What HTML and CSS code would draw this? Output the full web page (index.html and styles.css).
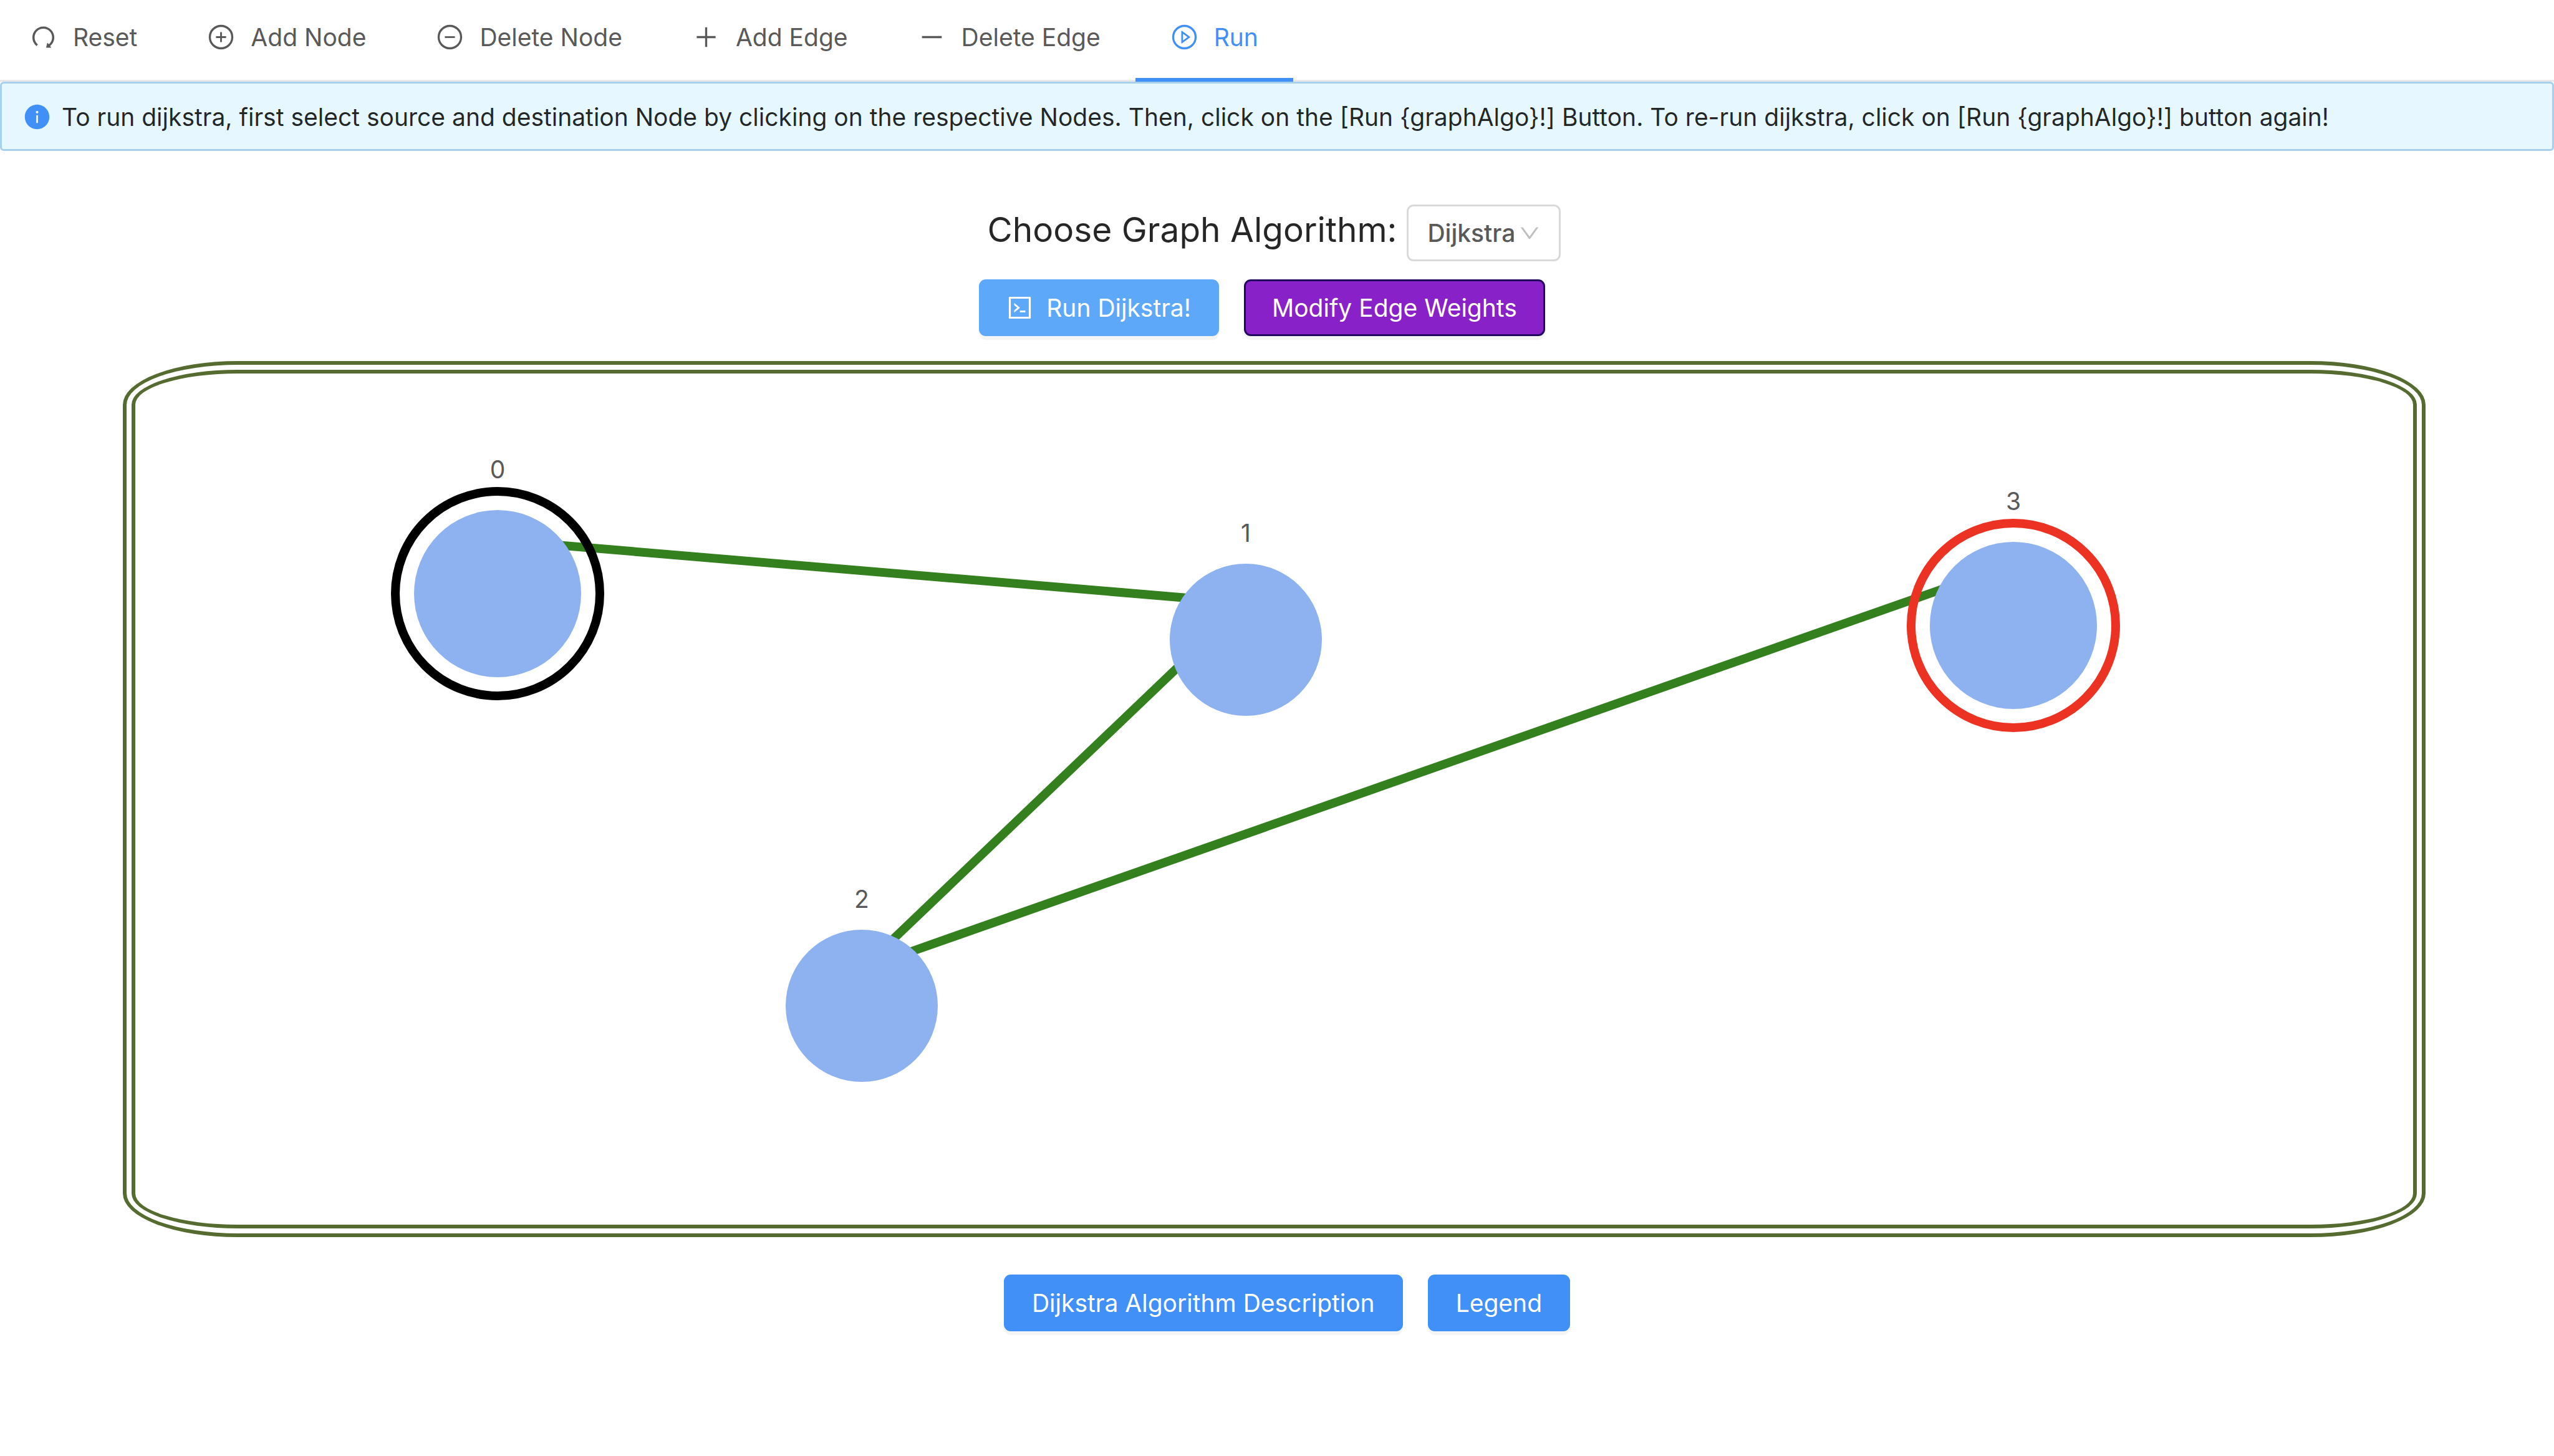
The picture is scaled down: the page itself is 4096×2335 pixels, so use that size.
FILE: index.html
```html
<!DOCTYPE html>
<html lang="en">
<head>
<meta charset="utf-8">
<meta name="viewport" content="width=device-width, initial-scale=1">
<title>Graph Algorithms</title>
<link rel="stylesheet" href="styles.css">
</head>
<body>
<nav class="menu" aria-label="Graph tools">
  <button class="menu-item" type="button">
    <svg class="icon" viewBox="0 0 1024 1024" aria-hidden="true"><path transform="translate(1024 0) scale(-1 1)" d="M511.4 124C290.5 124.3 112 303 112 523.9c0 128 60.2 242 153.8 315.2l-37.5 48c-4.1 5.3-.3 13 6.3 12.9l167-.8c5.2 0 9-4.9 7.7-9.9L369.8 727a8 8 0 00-14.1-3L315 776.1c-10.2-8-20-16.7-29.3-26a318.64 318.64 0 01-68.6-101.7C200.4 609 192 567.1 192 523.9s8.4-85.1 25.1-124.5c16.1-38.1 39.2-72.3 68.6-101.7 29.4-29.4 63.6-52.5 101.7-68.6C426.9 212.4 468.8 204 512 204s85.1 8.4 124.5 25.1c38.1 16.1 72.3 39.2 101.7 68.6 29.4 29.4 52.5 63.6 68.6 101.7 16.7 39.4 25.1 81.3 25.1 124.5s-8.4 85.1-25.1 124.5a318.64 318.64 0 01-68.6 101.7c-7.5 7.5-15.3 14.5-23.4 21.2a7.93 7.93 0 00-1.2 11.1l39.4 50.5c2.8 3.5 7.9 4.1 11.4 1.3C854.5 760.8 912 649.1 912 523.9c0-221.1-179.4-400.2-400.6-399.9z"/></svg>
    <span>Reset</span>
  </button>
  <button class="menu-item" type="button">
    <svg class="icon" viewBox="0 0 1024 1024" aria-hidden="true"><path d="M696 480H544V328h-64v152H328v64h152v152h64V544h152z"/><circle class="icon-ring" cx="512" cy="512" r="410"/></svg>
    <span>Add Node</span>
  </button>
  <button class="menu-item" type="button">
    <svg class="icon" viewBox="0 0 1024 1024" aria-hidden="true"><path d="M328 480h368v64H328z"/><circle class="icon-ring" cx="512" cy="512" r="410"/></svg>
    <span>Delete Node</span>
  </button>
  <button class="menu-item" type="button">
    <svg class="icon" viewBox="0 0 1024 1024" aria-hidden="true"><path d="M474 152h76v720h-76zM168 474h688v76H168z"/></svg>
    <span>Add Edge</span>
  </button>
  <button class="menu-item" type="button">
    <svg class="icon" viewBox="0 0 1024 1024" aria-hidden="true"><path d="M152 474h720v76H152z"/></svg>
    <span>Delete Edge</span>
  </button>
  <button class="menu-item menu-item-selected" type="button" aria-current="page">
    <svg class="icon" viewBox="0 0 1024 1024" aria-hidden="true"><circle class="icon-ring" cx="512" cy="512" r="410"/><path d="M719.4 499.1l-296.1-215A15.9 15.9 0 00398 297v430c0 13.1 14.8 20.5 25.3 12.9l296.1-215a15.9 15.9 0 000-25.8zm-257.6 134V390.9L628.5 512 461.8 633.1z"/></svg>
    <span>Run</span>
  </button>
</nav>

<div class="alert" role="alert">
  <svg class="icon alert-icon" viewBox="0 0 1024 1024" aria-hidden="true"><path d="M512 64C264.6 64 64 264.6 64 512s200.6 448 448 448 448-200.6 448-448S759.4 64 512 64zm32 664c0 4.4-3.6 8-8 8h-48c-4.4 0-8-3.6-8-8V456c0-4.4 3.6-8 8-8h48c4.4 0 8 3.6 8 8v272zm-32-344a48.01 48.01 0 010-96 48.01 48.01 0 010 96z"/></svg>
  <span class="alert-text">To run dijkstra, first select source and destination Node by clicking on the respective Nodes. Then, click on the [Run {graphAlgo}!] Button. To re-run dijkstra, click on [Run {graphAlgo}!] button again!</span>
</div>

<main class="content">
  <div class="chooser">
    <label class="chooser-label" for="algorithm">Choose Graph Algorithm:</label>
    <span class="select-box">
      <select class="select" id="algorithm"><option>Dijkstra</option></select>
      <svg class="select-arrow" viewBox="0 0 1024 1024" aria-hidden="true"><path d="M884 256h-75c-5.1 0-9.9 2.5-12.9 6.6L512 654.2 227.9 262.6c-3-4.1-7.8-6.6-12.9-6.6h-75c-6.5 0-10.3 7.4-6.5 12.7l352.6 486.1c12.8 17.6 39 17.6 51.7 0l352.6-486.1c3.9-5.3.1-12.7-6.4-12.7z"/></svg>
    </span>
  </div>

  <div class="actions actions-top">
    <button class="btn btn-run" type="button">
      <svg class="icon" viewBox="0 0 1024 1024" aria-hidden="true"><path d="M516 673c0 4.4 3.4 8 7.5 8h185c4.1 0 7.5-3.6 7.5-8v-48c0-4.4-3.4-8-7.5-8h-185c-4.1 0-7.5 3.6-7.5 8v48zm-194.9 6.1l192-161c3.8-3.2 3.8-9.1 0-12.3l-192-160.9A7.95 7.95 0 00308 351v62.7c0 2.4 1 4.6 2.9 6.1L420.7 512l-109.8 92.2a8.1 8.1 0 00-2.9 6.1V673c0 6.8 7.9 10.5 13.1 6.1zM880 112H144c-17.7 0-32 14.3-32 32v736c0 17.7 14.3 32 32 32h736c17.7 0 32-14.3 32-32V144c0-17.7-14.3-32-32-32zm-40 728H184V184h656v656z"/></svg>
      <span>Run Dijkstra!</span>
    </button>
    <button class="btn btn-weights" type="button">Modify Edge Weights</button>
  </div>

  <div class="board">
    <div class="board-inner">
      <svg class="graph" viewBox="0 0 3653 1365" role="img" aria-label="Graph with four nodes and three edges">
        <g class="edges">
          <line x1="663" y1="274" x2="1723" y2="363"/>
          <line x1="1203" y1="919" x2="1693" y2="451"/>
          <line x1="1233" y1="931" x2="2903" y2="344"/>
        </g>
        <g class="nodes">
          <circle cx="581" cy="353" r="134"/>
          <circle cx="1781" cy="427" r="122"/>
          <circle cx="1165" cy="1014" r="122"/>
          <circle cx="3012" cy="404" r="134"/>
        </g>
        <circle class="ring ring-source" cx="581" cy="353" r="164"/>
        <circle class="ring ring-target" cx="3012" cy="404" r="164"/>
        <g class="labels">
          <text x="581" y="168">0</text>
          <text x="1781" y="270">1</text>
          <text x="1165" y="857">2</text>
          <text x="3012" y="219">3</text>
        </g>
      </svg>
    </div>
  </div>

  <div class="actions actions-bottom">
    <button class="btn" type="button">Dijkstra Algorithm Description</button>
    <button class="btn" type="button">Legend</button>
  </div>
</main>
</body>
</html>
```

FILE: styles.css
```css
* {
  box-sizing: border-box;
}

body {
  margin: 0;
  background: #fff;
  color: rgba(0, 0, 0, 0.85);
  font-family: Inter, "Liberation Sans", sans-serif;
  font-size: 39px;
  line-height: 60px;
}

button,
select {
  font: inherit;
}

.icon {
  flex: none;
  width: 45px;
  height: 45px;
  fill: currentColor;
}

.icon-ring {
  fill: none;
  stroke: currentColor;
  stroke-width: 76;
}

/* Top menu */

.menu {
  display: flex;
  height: 131px;
  box-shadow: inset 0 -3px #e8e8e8;
}

.menu-item {
  display: flex;
  align-items: center;
  gap: 25px;
  padding: 0 56px 6px;
  border: 0;
  border-bottom: 6px solid transparent;
  background: none;
  color: #595959;
  white-space: nowrap;
}

.menu-item:first-child {
  padding-left: 47px;
}

.menu-item-selected {
  border-bottom-color: #4190f7;
  color: #4190f7;
}

/* Info banner */

.alert {
  display: flex;
  align-items: center;
  gap: 17px;
  min-height: 111px;
  padding: 2px 34px 0;
  border: 3px solid #a6d0ee;
  border-radius: 6px;
  background: #e6f7ff;
}

.alert-icon {
  color: #4190f7;
}

/* Main area */

.content {
  display: flex;
  flex-direction: column;
  padding: 86px 206px 200px 197px;
}

.chooser {
  display: flex;
  justify-content: center;
  align-items: baseline;
  gap: 16px;
}

.chooser-label {
  font-size: 55px;
}

.select-box {
  position: relative;
}

.select {
  display: block;
  width: 247px;
  height: 91px;
  padding: 0 30px;
  border: 3px solid #d9d9d9;
  border-radius: 11px;
  appearance: none;
  background: #fff;
  color: #595959;
  font-weight: 500;
}

.select-arrow {
  position: absolute;
  top: 27px;
  right: 31px;
  width: 38px;
  height: 38px;
  fill: #bfbfbf;
  pointer-events: none;
}

.actions {
  display: flex;
  justify-content: center;
  gap: 40px;
}

.actions-top {
  margin: 29px 0 40px;
  padding-right: 39px;
}

.actions-bottom {
  margin-top: 60px;
  padding-left: 41px;
}

.btn {
  display: flex;
  align-items: center;
  gap: 20px;
  height: 91px;
  padding: 0 42px;
  border: 3px solid #4190f7;
  border-radius: 11px;
  background: #4190f7;
  box-shadow: 0 6px 0 rgba(0, 0, 0, 0.04);
  color: #fff;
  white-space: nowrap;
}

.btn-run {
  padding-left: 40px;
  border-color: #5da8f8;
  background: #5da8f8;
}

.btn-weights {
  border-color: #22075e;
  background: #8822c8;
}

/* Graph board: two thin outlines with a gap between them */

.board {
  padding: 8px;
  border: 6px solid #556b2f;
  border-radius: 5%;
}

.board-inner {
  border: 6px solid #556b2f;
  border-radius: 170px / 56px;
}

.graph {
  display: block;
  width: 100%;
  height: auto;
}

.edges {
  stroke: #347f1e;
  stroke-width: 14;
}

.nodes {
  fill: #8eb1f0;
}

.ring {
  fill: none;
  stroke-width: 14;
}

.ring-source {
  stroke: #000;
}

.ring-target {
  stroke: #eb3223;
}

.labels {
  fill: #595959;
  text-anchor: middle;
}
```
